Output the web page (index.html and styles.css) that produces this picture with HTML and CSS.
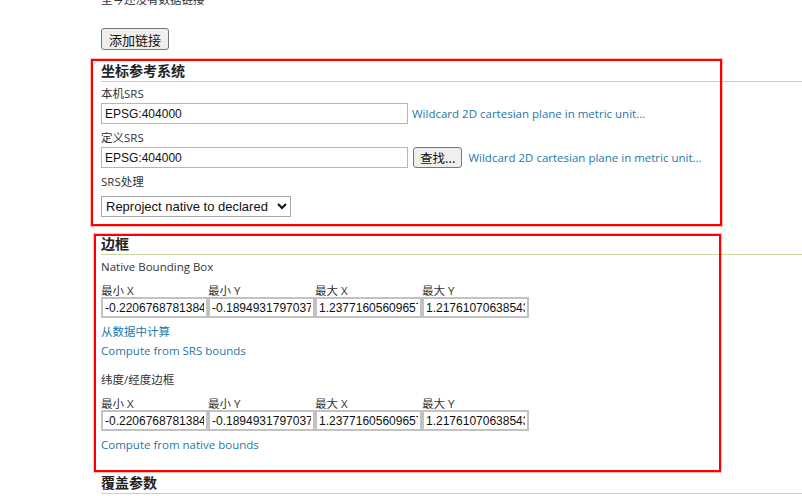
FILE: index.html
```html
<!DOCTYPE html>
<html lang="zh-CN">
<head>
  <meta charset="UTF-8">
  <title>编辑图层</title>
  <link rel="stylesheet" href="styles.css">
</head>
<body>

<main class="page">
  <p class="note">至今还没有数据链接</p>
  <button class="btn">添加链接</button>

  <!-- 坐标参考系统 -->
  <section class="group crs">
    <h3>坐标参考系统</h3>
    <label class="field-label first">本机SRS</label>
    <div class="row">
      <input class="text wide" type="text" value="EPSG:404000">
      <a href="#">Wildcard 2D cartesian plane in metric unit...</a>
    </div>
    <label class="field-label">定义SRS</label>
    <div class="row">
      <input class="text wide" type="text" value="EPSG:404000">
      <button class="btn small">查找...</button>
      <a href="#">Wildcard 2D cartesian plane in metric unit...</a>
    </div>
    <label class="field-label">SRS处理</label>
    <select class="select">
      <option>Reproject native to declared</option>
      <option>Force declared</option>
      <option>Keep native</option>
    </select>
  </section>

  <!-- 边框 -->
  <section class="group bbox">
    <h3>边框</h3>
    <label class="field-label first">Native Bounding Box</label>
    <div class="bounds">
      <label>最小 X</label><label>最小 Y</label><label>最大 X</label><label>最大 Y</label>
      <input class="text num" type="text" value="-0.22067687813841">
      <input class="text num" type="text" value="-0.18949317970370">
      <input class="text num" type="text" value="1.2377160560965717">
      <input class="text num" type="text" value="1.2176107063854321">
    </div>
    <a class="link-line" href="#">从数据中计算</a>
    <a class="link-line" href="#">Compute from SRS bounds</a>

    <label class="field-label spaced">纬度/经度边框</label>
    <div class="bounds">
      <label>最小 X</label><label>最小 Y</label><label>最大 X</label><label>最大 Y</label>
      <input class="text num" type="text" value="-0.22067687813841">
      <input class="text num" type="text" value="-0.18949317970370">
      <input class="text num" type="text" value="1.2377160560965717">
      <input class="text num" type="text" value="1.2176107063854321">
    </div>
    <a class="link-line" href="#">Compute from native bounds</a>
  </section>

  <section class="group params">
    <h3>覆盖参数</h3>
  </section>
</main>

</body>
</html>
```

FILE: styles.css
```css
body {
  margin: 0;
  background: #fff;
  color: #333;
  font-family: "Open Sans", "Noto Sans CJK SC", sans-serif;
  font-size: 11.5px;
  overflow: hidden;
}
.page {
  padding-left: 101px;
}
.note {
  margin: -9px 0 0;
  line-height: 18px;
}
a {
  color: #1f77a8;
  text-decoration: none;
}

/* buttons */
.btn {
  display: block;
  margin-top: 19px;
  height: 22px;
  padding: 0 7px;
  font-family: "Noto Sans CJK SC", sans-serif;
  font-size: 13px;
  color: #111;
  background: #efefef;
  border: 1px solid #767676;
  border-radius: 3px;
}
.btn.small {
  display: inline-block;
  margin: 0 2px 0 1px;
  height: 21px;
  padding: 0 6px;
  font-size: 12.5px;
}

/* fieldset-like groups */
.group {
  position: relative;
}
.group h3 {
  margin: 0;
  line-height: 20px;
  font-size: 14px;
  font-weight: bold;
  color: #222;
  border-bottom: 1px solid #c6d9a3;
}
.crs {
  margin-top: 11px;
}
.bbox {
  margin-top: 17px;
  padding-bottom: 16px;
}
.params {
  margin-top: 3px;
}
.crs::after,
.bbox::after {
  content: "";
  position: absolute;
  border: 2px solid #f00;
  box-shadow: 0 0 0 1px rgba(255, 0, 0, 0.25);
  pointer-events: none;
}
.crs::after {
  top: -2px;
  left: -10px;
  width: 627px;
  height: 163px;
}
.bbox::after {
  top: 0;
  left: -7px;
  width: 623px;
  height: 234px;
}

.field-label {
  display: block;
  margin-top: 5px;
  line-height: 18px;
}
.field-label.first {
  margin-top: 3px;
}
.field-label.spaced {
  margin-top: 11px;
}
.row {
  display: flex;
  align-items: center;
  gap: 4px;
}

/* inputs */
.text {
  box-sizing: border-box;
  height: 21px;
  margin: 0;
  padding: 0 3px;
  font-family: "Liberation Sans", sans-serif;
  font-size: 12px;
  color: #111;
  border: 1px solid #b5b5b5;
  background: #fff;
}
.wide {
  width: 307px;
}
.select {
  display: block;
  margin-top: 5px;
  height: 21px;
  width: 190px;
  font-family: "Liberation Sans", sans-serif;
  font-size: 13px;
  color: #111;
  border: 1px solid #a9a9a9;
  background: #fff;
}

/* bounding box grid */
.bounds {
  display: grid;
  grid-template-columns: repeat(4, 107px);
  margin-top: 3px;
}
.bounds label {
  padding-top: 5px;
  line-height: 13px;
}
.num {
  width: 107px;
  border: 2px solid #c2c2c2;
  padding: 0 2px;
}
.link-line {
  display: block;
  line-height: 18px;
  margin-top: 1px;
}
.bounds + .link-line {
  margin-top: 5px;
}
```
